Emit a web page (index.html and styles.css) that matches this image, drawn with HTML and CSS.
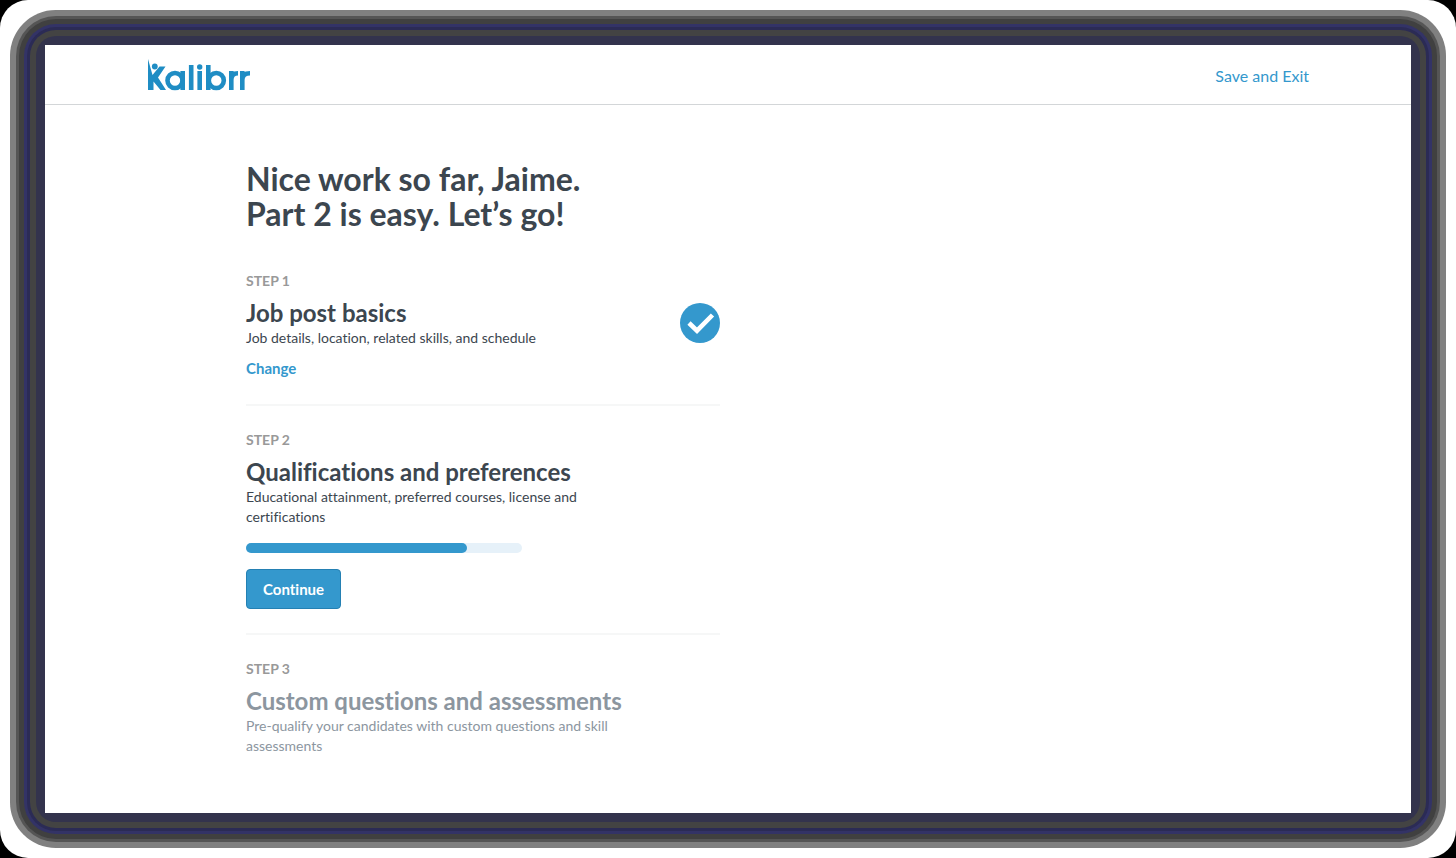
FILE: index.html
```html
<!DOCTYPE html>
<html lang="en">
<head>
<meta charset="utf-8">
<title>Kalibrr – Post a job</title>
<link rel="stylesheet" href="styles.css">
</head>
<body>
<div class="backdrop">
<div class="frame">
<div class="window">
  <header class="topbar">
    <a class="brand" href="#" aria-label="Kalibrr">
      <svg class="logo" viewBox="0 0 104 34" fill="none" stroke="#1f8dc4" stroke-width="4.6">
        <path d="M1 0L5.500 16L12.500 7.500H18.500L11 18.500L19 31H13.500L6.500 22.500V31H1Z" fill="#1f8dc4" stroke="none"/>
        <circle cx="7.800" cy="7.500" r="2.900" fill="#1f8dc4" stroke="none"/>
        <circle cx="28" cy="21.500" r="7.500"/>
        <path d="M35.700 12V31M44.200 6V31M52.700 12V31M61.300 6V31"/>
        <circle cx="52.700" cy="8" r="2.700" fill="#1f8dc4" stroke="none"/>
        <circle cx="69.300" cy="21.500" r="7.500"/>
        <path d="M84.300 31V12M84.300 21Q84.300 14.300 91 14.300M95.300 31V12M95.300 21Q95.300 14.300 103 14.300"/>
      </svg>
    </a>
    <a class="exit" href="#">Save and Exit</a>
  </header>
  <main class="content">
    <h1 class="title">Nice work so far, Jaime.<br>Part 2 is easy. Let’s go!</h1>
    <section class="step">
      <p class="label">STEP 1</p>
      <div class="row">
        <div>
          <h2 class="name">Job post basics</h2>
          <p class="desc">Job details, location, related skills, and schedule</p>
        </div>
        <svg class="done" viewBox="0 0 40 40" role="img" aria-label="Completed">
          <circle cx="20" cy="20" r="20" fill="#3498cd"/>
          <path d="M9 20L17 27.700L32.500 12" fill="none" stroke="#fff" stroke-width="4.600"/>
        </svg>
      </div>
      <a class="change" href="#">Change</a>
    </section>
    <section class="step">
      <p class="label">STEP 2</p>
      <h2 class="name">Qualifications and preferences</h2>
      <p class="desc">Educational attainment, preferred courses, license and certifications</p>
      <div class="progress" role="progressbar" aria-label="Step 2 progress" aria-valuenow="80" aria-valuemin="0" aria-valuemax="100"><div class="bar" style="width:80%"></div></div>
      <button class="continue" type="button">Continue</button>
    </section>
    <section class="step pending">
      <p class="label">STEP 3</p>
      <h2 class="name">Custom questions and assessments</h2>
      <p class="desc">Pre-qualify your candidates with custom questions and skill assessments</p>
    </section>
  </main>
</div>
</div>
</div>
</body>
</html>
```
FILE: styles.css
```css
* { box-sizing: border-box; }
body { margin: 0; background: #000; font-family: Lato, "Liberation Sans", sans-serif; color: #3c464f; font-variant-ligatures: none; }
h1, h2, p { margin: 0; }
a { color: #3498cd; text-decoration: none; }
.backdrop { min-height: 100vh; padding: 36px; display: flex; background: #fff; border-radius: 28px; }
.frame {
  flex: 1; display: flex; padding: 9px; border-radius: 20px; background: #33334d;
  box-shadow: 0 0 0 6px #434343, 0 0 0 9px #2b2b55, 0 0 0 12px #333366, 0 0 0 17px #404040, 0 0 0 20px #555, 0 0 0 26px #808080;
}
.window { flex: 1; background: #fff; }
.topbar { height: 60px; padding: 0 102px; display: flex; justify-content: space-between; align-items: center; border-bottom: 1px solid #d3d6d8; }
.brand { display: block; height: 34px; }
.logo { display: block; width: 104px; height: 34px; margin-top: 1px; }
.exit { font-size: 16px; line-height: 24px; padding-top: 2px; }
.content { max-width: 675px; padding: 56px 0 56px 201px; }
.title { font-size: 32px; line-height: 35px; font-weight: 700; margin-bottom: 40px; }
.step { padding-bottom: 26px; margin-bottom: 24px; border-bottom: 2px solid #f6f7f7; }
.step + .step { padding-bottom: 24px; }
.label { font-size: 14px; line-height: 20px; font-weight: 700; color: #999; margin-bottom: 7px; }
.row { display: flex; justify-content: space-between; align-items: center; }
.name { font-size: 24px; line-height: 30px; font-weight: 700; }
.desc { font-size: 14px; line-height: 20px; max-width: 380px; }
.done { width: 40px; height: 40px; }
.change { display: block; width: fit-content; font-size: 15px; line-height: 20px; font-weight: 700; margin-top: 10px; }
.progress { width: 276px; height: 10px; margin: 16px 0; border-radius: 5px; background: #e6f1f9; }
.bar { height: 10px; border-radius: 5px; background: #3498cd; }
.continue { display: block; height: 40px; padding: 0 16px; border: 1px solid #2480b3; border-radius: 4px; background: #3498cd; color: #fff; font: 700 15px/20px Lato, "Liberation Sans", sans-serif; font-variant-ligatures: none; }
.step.pending { border: 0; margin: 0; padding: 0; }
.pending .name, .pending .desc { color: #8c969f; }
```
